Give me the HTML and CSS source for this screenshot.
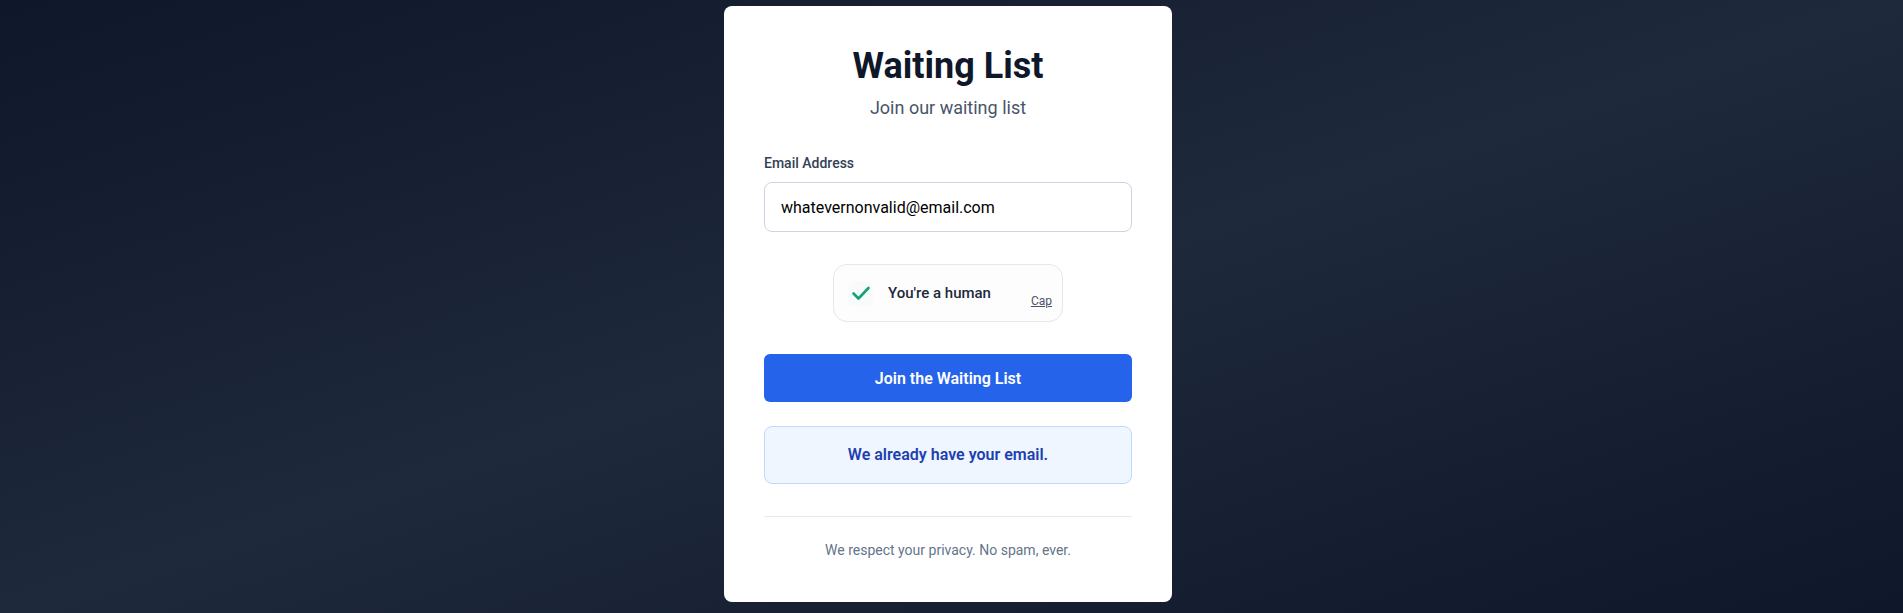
FILE: index.html
```html
<!DOCTYPE html>
<html lang="en">
<head>
<meta charset="utf-8">
<title>Waiting List</title>
<link rel="stylesheet" href="styles.css">
</head>
<body>
<main class="page">
  <section class="card">
    <header class="card-header">
      <h1 class="title">Waiting List</h1>
      <p class="subtitle">Join our waiting list</p>
    </header>
    <form class="form">
      <div class="field">
        <label class="label" for="email">Email Address</label>
        <input class="input" id="email" type="email" value="whatevernonvalid@email.com">
      </div>
      <div class="captcha-wrap">
        <div class="captcha">
          <div class="checkbox">
            <svg width="24" height="24" viewBox="0 0 24 24" fill="none" stroke="#10a37a" stroke-width="2.6" stroke-linecap="round" stroke-linejoin="round"><polyline points="4.5 12.5 9.5 17.5 19.5 7"/></svg>
          </div>
          <span class="captcha-label">You're a human</span>
          <a class="captcha-link" href="#">Cap</a>
        </div>
      </div>
      <button class="button" type="button">Join the Waiting List</button>
      <div class="message">We already have your email.</div>
    </form>
    <footer class="card-footer">
      <p class="note">We respect your privacy. No spam, ever.</p>
    </footer>
  </section>
</main>
</body>
</html>
```
FILE: styles.css
```css
* { box-sizing: border-box; }
html, body { margin: 0; padding: 0; height: 100%; }
body {
  font-family: Roboto, "Liberation Sans", sans-serif;
  background: linear-gradient(to bottom right, #0f172a 0%, #1e293b 50%, #0f172a 100%);
  min-height: 613px;
  overflow: hidden;
}
.page {
  display: flex;
  justify-content: center;
  padding-top: 6px;
  padding-right: 7px;
}
.card {
  width: 448px;
  background: #ffffff;
  border-radius: 8px;
  padding: 40px 40px 42px;
}
.card-header { text-align: center; margin-bottom: 31px; }
.title {
  margin: 0;
  font-size: 36px;
  line-height: 40px;
  font-weight: 700;
  color: #0f172a;
}
.subtitle {
  margin: 8px 0 0;
  font-size: 18px;
  line-height: 28px;
  color: #475569;
}
.form { display: flex; flex-direction: column; }
.field { display: flex; flex-direction: column; }
.label {
  font-size: 14px;
  line-height: 20px;
  font-weight: 500;
  color: #334155;
  margin-bottom: 9px;
}
.input {
  width: 100%;
  height: 50px;
  padding: 12px 16px;
  font-family: inherit;
  font-size: 16px;
  color: #000;
  border: 1px solid #cbd5e1;
  border-radius: 8px;
  background: #fff;
  outline: none;
}
.captcha-wrap {
  display: flex;
  justify-content: center;
  margin-top: 32px;
}
.captcha {
  position: relative;
  width: 230px;
  height: 58px;
  display: flex;
  align-items: center;
  gap: 15px;
  padding: 0 14px;
  background: #fdfdfe;
  border: 1px solid #e2e8f0;
  border-radius: 14px;
}
.checkbox {
  width: 25px;
  height: 25px;
  border-radius: 6px;
  background: #f9fafa;
  display: flex;
  align-items: center;
  justify-content: center;
  flex: none;
}
.captcha-label {
  font-size: 15px;
  font-weight: 500;
  color: #1e293b;
}
.captcha-link {
  position: absolute;
  right: 10px;
  bottom: 13px;
  font-size: 12px;
  line-height: 14px;
  color: #475569;
  text-decoration: underline;
}
.button {
  margin-top: 32px;
  height: 48px;
  width: 100%;
  border: none;
  border-radius: 6px;
  background: #2563eb;
  color: #ffffff;
  font-family: inherit;
  font-size: 16px;
  font-weight: 600;
  cursor: pointer;
}
.message {
  margin-top: 24px;
  padding: 16px;
  text-align: center;
  font-size: 16px;
  line-height: 24px;
  font-weight: 600;
  color: #1e40af;
  background: #eff6ff;
  border: 1px solid #bfdbfe;
  border-radius: 8px;
}
.card-footer {
  margin-top: 32px;
  padding-top: 23px;
  border-top: 1px solid #e2e8f0;
  text-align: center;
}
.note {
  margin: 0;
  font-size: 14px;
  line-height: 20px;
  color: #64748b;
}
```
